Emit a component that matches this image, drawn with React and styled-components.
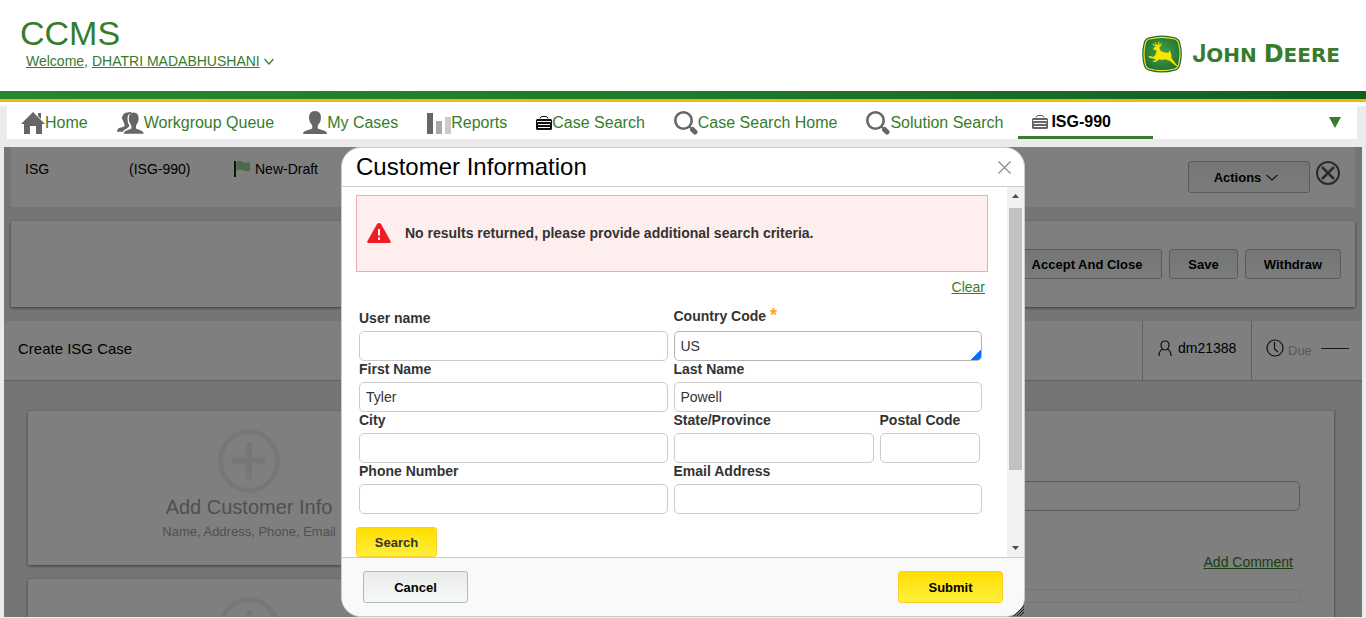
import React from "react";
import styled, { createGlobalStyle } from "styled-components";

const GlobalStyle = createGlobalStyle`
  * { box-sizing: border-box; }
  html, body, #root { height: 100%; }
  body {
    margin: 0;
    background: #ebebeb;
    color: #000;
    font-family: "Liberation Sans", Arial, sans-serif;
    font-size: 14px;
    line-height: 16px;
  }
  a { color: #367c2b; }
  button, input { font-family: inherit; }
`;

const Shell = styled.div`
  display: flex;
  flex-direction: column;
  height: 100vh;
  overflow: hidden;
  padding-bottom: 1px;
`;

/* ---------- header ---------- */

const Header = styled.header`
  display: flex;
  justify-content: space-between;
  align-items: flex-start;
  flex: none;
  height: 91px;
  padding: 14px 26px 0 20px;
  background: #fff;
`;

const AppTitle = styled.h1`
  margin: 0;
  color: #367c2b;
  font-size: 34px;
  font-weight: 400;
  line-height: 38px;
`;

const Welcome = styled.div`
  display: flex;
  align-items: center;
  gap: 4px;
  padding-left: 6px;
  line-height: 18px;
`;

const Brand = styled.div`
  display: flex;
  align-items: center;
  gap: 9px;
  padding-top: 21px;
`;

const Wordmark = styled.span`
  color: #367c2b;
  font-family: "DejaVu Sans", sans-serif;
  font-weight: 700;
  font-size: 20px;
  line-height: 24px;
  white-space: nowrap;
`;

const Initial = styled.span`
  font-family: ${(p) => (p.$baseline ? "Inter, sans-serif" : "inherit")};
  font-size: 24px;
`;

const Stripe = styled.div`
  flex: none;
  height: 15px;
  padding-bottom: 4px;
  background: #fff;
`;

const StripeBar = styled.div`
  height: 11px;
  border-bottom: 3px solid #efbd00;
  background: linear-gradient(to right, #28862f, #1f7a2b 50%, #0f5f20);
`;

/* ---------- tabs ---------- */

const TabBar = styled.nav`
  display: flex;
  flex: none;
  gap: 1px;
  height: 33px;
  margin: 0 9px 8px 7px;
  padding-right: 16px;
  background: #fff;
`;

const Tab = styled.a`
  display: flex;
  align-items: center;
  gap: ${(p) => (p.$active ? "3px" : "0")};
  padding: ${(p) => (p.$active ? "1px 42px 0 14px" : "0 14px")};
  border-bottom: ${(p) => (p.$active ? "3px solid #367c2b" : "0")};
  color: ${(p) => (p.$active ? "#000" : "#367c2b")};
  font-size: 16px;
  font-weight: ${(p) => (p.$active ? 700 : 400)};
  line-height: 20px;
  text-decoration: none;
  white-space: nowrap;
  svg { flex: none; }
`;

const TabMenuButton = styled.button`
  display: flex;
  align-items: center;
  margin-left: auto;
  padding: 0;
  border: 0;
  background: none;
`;

/* ---------- case workspace ---------- */

const Workspace = styled.div`
  position: relative;
  flex: 1;
  min-height: 0;
  margin: 0 4px;
  overflow: hidden;
`;

const CaseHeader = styled.section`
  display: flex;
  align-items: flex-start;
  height: 60px;
  margin: 0 7px;
  padding: 14px 14px 0;
  background: #fff;
`;

const CaseText = styled.span`
  min-width: ${(p) => p.$width || "0"};
`;

const Status = styled.span`
  display: flex;
  align-items: center;
  gap: 5px;
  flex: 1;
`;

const CloseSlot = styled.div`
  padding: 0 1px 0 6px;
`;

const GreyButton = styled.button`
  display: flex;
  align-items: center;
  justify-content: center;
  gap: 5px;
  height: ${(p) => (p.$tall ? "32px" : "30px")};
  width: ${(p) => p.$width};
  padding: 0 ${(p) => (p.$menu ? "6px" : "0")} 0 0;
  border: 1px solid #b5b8b8;
  border-radius: 3px;
  background: linear-gradient(#e9ebea, #f6f9f9);
  color: #000;
  font-size: 13px;
  font-weight: 700;
  white-space: nowrap;
`;

const YellowButton = styled(GreyButton)`
  border-color: #ffcd2b;
  background: linear-gradient(#ffde00, #fff03c);
  color: ${(p) => (p.$soft ? "#333" : "#000")};
`;

const IconButton = styled.button`
  display: flex;
  padding: 0;
  border: 0;
  background: none;
`;

const ActionCard = styled.section`
  display: flex;
  justify-content: flex-end;
  align-items: center;
  gap: 7px;
  height: 86px;
  margin: 14px 7px;
  padding: 0 14px;
  background: #fff;
  box-shadow: 0 1px 3px rgba(0, 0, 0, 0.5);
`;

const StageBar = styled.section`
  display: flex;
  height: 60px;
  border-bottom: 1px solid #c0c0c0;
  background: #fff;
`;

const StageTitle = styled.h2`
  flex: 1;
  margin: 0;
  padding: 20px 14px;
  font-size: 15px;
  font-weight: 400;
`;

const StageCell = styled.div`
  display: flex;
  align-items: center;
  gap: ${(p) => p.$gap};
  width: ${(p) => p.$width};
  padding: 0 0 5px 14px;
  border-left: 1px solid #c0c0c0;
`;

const DueLabel = styled.span`
  padding-top: 6px;
  color: #b4b4b4;
  font-size: 13px;
`;

const DueLine = styled.span`
  width: 28px;
  height: 1px;
  margin-left: 5px;
  background: #333;
`;

const CaseBody = styled.div`
  display: flex;
  gap: 14px;
  padding: 30px 28px 0 24px;
`;

const CardColumn = styled.div`
  display: flex;
  flex-direction: column;
  gap: 14px;
  width: 442px;
`;

const AddCard = styled.section`
  display: flex;
  flex-direction: column;
  align-items: center;
  height: 154px;
  padding-top: 18px;
  background: #fff;
  box-shadow: 0 1px 3px rgba(0, 0, 0, 0.5);
  color: #a0a0a0;
  font-size: 13px;
`;

const AddTitle = styled.span`
  padding: 2px 0 5px;
  font-size: 20px;
  line-height: 24px;
`;

const CommentPanel = styled.section`
  flex: 1;
  height: 400px;
  padding: 70px 34px 0;
  background: #fff;
  box-shadow: 1px 0 2px rgba(0, 0, 0, 0.3);
`;

const CommentRow = styled.div`
  display: flex;
  justify-content: flex-end;
  padding: 43px 7px 19px;
`;

const CommentBox = styled.div`
  height: 14px;
  border: 1px solid #ebebeb;
`;

/* ---------- dialog ---------- */

const Overlay = styled.div`
  position: absolute;
  inset: 0;
  display: flex;
  justify-content: center;
  background: rgba(0, 0, 0, 0.5);
`;

const Dialog = styled.section`
  position: relative;
  display: flex;
  flex-direction: column;
  width: 684px;
  max-width: 100%;
  height: 100%;
  overflow: hidden;
  border: 1px solid #ccc;
  border-radius: 20px;
  background: #fff;
`;

const DialogHeader = styled.header`
  display: flex;
  justify-content: space-between;
  align-items: center;
  flex: none;
  height: 39px;
  padding: 0 13px 0 14px;
  border-bottom: 1px solid #ccc;
`;

const DialogTitle = styled.h2`
  margin: 0;
  font-size: 24px;
  font-weight: 400;
  line-height: 28px;
`;

const DialogMain = styled.div`
  display: flex;
  flex: 1;
  min-height: 0;
`;

const DialogContent = styled.div`
  flex: 1;
  overflow: hidden;
  padding: 8px 19px 0 14px;
`;

const ScrollTrack = styled.div`
  display: flex;
  flex-direction: column;
  align-items: center;
  width: 17px;
  padding: 6px 2px;
  background: #f1f1f1;
`;

const ScrollThumb = styled.div`
  width: 13px;
  height: 262px;
  margin: 9px 0 auto;
  background: #c1c1c1;
`;

const Alert = styled.div`
  display: flex;
  align-items: center;
  gap: 14px;
  height: 77px;
  padding: 0 10px 1px;
  border: 1px solid #e9b0b0;
  background: #feeeee;
  color: #333;
  font-weight: 700;
`;

const ClearRow = styled.div`
  display: flex;
  justify-content: flex-end;
  padding: 7px 3px 15px;
`;

const Fields = styled.div`
  display: grid;
  grid-template-columns: 1fr 1fr;
  gap: 0 6px;
  align-items: end;
  padding: 0 6px 13px 3px;
`;

const FieldPair = styled.div`
  display: grid;
  grid-template-columns: 200px 100px;
  gap: 6px;
`;

const Field = styled.div`
  display: flex;
  flex-direction: column;
  min-width: 0;
  margin-top: ${(p) => (p.$required ? "-2px" : "0")};
`;

const FieldLabel = styled.label`
  padding-bottom: ${(p) => (p.$required ? "7px" : "5px")};
  color: #333;
  font-weight: 700;
  line-height: 16px;
`;

const Star = styled.span`
  color: #ffa414;
  font-size: 18px;
  font-weight: 700;
  line-height: 10px;
`;

const InputWrap = styled.div`
  position: relative;
`;

const TextInput = styled.input`
  display: block;
  width: 100%;
  height: 30px;
  padding: 0 6px;
  border: 1px solid ${(p) => (p.$required ? "#b4b4b4" : "#ccc")};
  border-radius: 5px;
  background: ${(p) => (p.$plain ? "transparent" : "#fff")};
  color: #333;
  font-size: 14px;
`;

const Corner = styled.span`
  position: absolute;
  right: 1px;
  bottom: 1px;
  width: 10px;
  height: 10px;
  border-bottom-right-radius: 4px;
  background: linear-gradient(135deg, transparent 50%, #0b6cff 50%);
`;

const DialogFooter = styled.footer`
  display: flex;
  justify-content: space-between;
  align-items: flex-start;
  flex: none;
  height: 59px;
  padding: 13px 21px 0;
  border-top: 1px solid #ccc;
  background: #f9f9f9;
`;

const ResizeGrip = styled.svg`
  position: absolute;
  right: calc(50% - 341px);
  bottom: 1px;
`;

/* ---------- drawings ---------- */

const Chevron = ({ width, color }) => (
  <svg width={width} height="7" viewBox={`0 0 ${width} 7`} fill="none" stroke={color} strokeWidth="1.2">
    <path d={`M.5 1 L${width / 2} 6 L${width - 0.5} 1`} />
  </svg>
);

const DeereBadge = () => (
  <svg width="42" height="38" viewBox="0 0 124 114">
    <defs>
      <radialGradient id="badge" cx=".5" cy=".45" r=".65">
        <stop offset="0" stopColor="#46a347" />
        <stop offset="1" stopColor="#196b32" />
      </radialGradient>
    </defs>
    <path d="M24 7Q62-4 100 7Q114 10 117 24Q126 57 117 90Q114 104 100 107Q62 118 24 107Q10 104 7 90Q-2 57 7 24Q10 10 24 7Z" fill="#1f6b38" />
    <path d="M25 12Q62 2 99 12Q110 15 112 26Q120 57 112 88Q110 99 99 102Q62 112 25 102Q14 99 12 88Q4 57 12 26Q14 15 25 12Z" fill="url(#badge)" stroke="#f6e21a" strokeWidth="3.5" />
    <path d="M36 40L40 36L45 34Q35 33 32 24Q38 30 44 30Q40 26 41 19Q44 28 50 31Q53 25 50 18Q57 23 54 32Q60 29 59 21Q64 31 54 37L56 45Q63 53 78 53Q85 53 84 48L82 45Q88 47 88 53Q92 60 90 69L108 92Q110 97 105 94L86 78L72 73Q62 76 54 73L44 80L33 81L44 73L30 70L26 69Q21 68 22 63L29 64L34 66Q41 64 43 58L46 46L38 45Z" fill="#fde400" />
  </svg>
);

const HomeIcon = () => (
  <svg width="24" height="24" viewBox="0 0 24 24" fill="#666">
    <path d="M12 1L24 13H21V23H15V15H9V23H3V13H0ZM17 2H20V8L17 5Z" />
  </svg>
);

const person = "M12 0Q18 0 18 7Q18 11 15 14Q14 18 16 18L22 20Q24 21 24 23H0Q0 21 2 20L8 18Q10 18 9 14Q6 11 6 7Q6 0 12 0Z";

const PersonIcon = () => (
  <svg width="24" height="24" viewBox="0 0 24 24" fill="#666">
    <path d={person} />
  </svg>
);

const GroupIcon = () => (
  <svg width="27" height="24" viewBox="0 0 28 24" fill="#666">
    <path d="M11 1Q14 0 16 2Q10 2 11 9Q11 13 13 15L10 18Q7 19 6 21H0Q0 18 3 17Q8 16 8 14L6 9L5 7Q6 1 11 1Z" />
    <path transform="translate(7 1) scale(.86 .96)" d={person} />
  </svg>
);

const ReportsIcon = () => (
  <svg width="24" height="22" viewBox="0 0 24 22">
    <path fill="#666" d="M0 1h6v21H0z" />
    <path fill="#aaa" d="M9 9h6v13H9z" />
    <path fill="#ccc" d="M18 5h6v17h-6z" />
  </svg>
);

const CaseIcon = ({ color }) => (
  <svg width="16" height="16" viewBox="0 0 16 16">
    <path d="M4 3.500Q4.500 1.500 6 1.500H10Q11.500 1.500 12 3.500" fill="none" stroke={color} />
    <path d="M1 4H15L16 5V14L15 15H1L0 14V5Z" fill={color} />
    <path d="M1 6.500H15M2 9.500H14M2 12.500H14" stroke="#fff" />
  </svg>
);

const SearchIcon = () => (
  <svg width="24" height="24" viewBox="0 0 24 24" fill="none">
    <circle cx="9.500" cy="9.500" r="8.200" stroke="#666" strokeWidth="2.600" />
    <path d="M15 15L17 17" stroke="#666" strokeWidth="2" />
    <path d="M18.500 18.500L21 21" stroke="#666" strokeWidth="5" strokeLinecap="round" />
  </svg>
);

const FlagIcon = () => (
  <svg width="16" height="16" viewBox="0 0 16 16">
    <path d="M1 0V16" stroke="#222" strokeWidth="2" />
    <path d="M2.500 1Q6-1 9 1Q12 2 16 1V10Q12 11 9 9Q6 8 2.500 10Z" fill="#94d594" />
  </svg>
);

const CloseCaseIcon = () => (
  <svg width="24" height="24" viewBox="0 0 24 24" fill="none" stroke="#555">
    <circle cx="12" cy="12" r="11" strokeWidth="2" />
    <path d="M6 6L18 18M18 6L6 18" strokeWidth="2.500" />
  </svg>
);

const UserOutlineIcon = () => (
  <svg width="15" height="18" viewBox="0 0 15 18" fill="none" stroke="#222" strokeWidth="1.200">
    <path d="M8 2Q12 2 12 6Q11.500 11 8 11Q4.500 11 4 6Q4 2 8 2ZM5.500 10Q2 12 2 17M10.500 10Q14 12 14 17" />
  </svg>
);

const ClockIcon = () => (
  <svg width="18" height="18" viewBox="0 0 18 18" fill="none" stroke="#222" strokeWidth="1.200">
    <circle cx="9" cy="9" r="8" />
    <path d="M8.500 3V10L12 13" />
  </svg>
);

const PlusIcon = () => (
  <svg width="62" height="64" viewBox="0 0 62 64" fill="none" stroke="#efefef">
    <ellipse cx="31" cy="32" rx="28.500" ry="29.500" strokeWidth="5" />
    <path d="M31 13V50M14 31.500H48" strokeWidth="6" />
  </svg>
);

const WarningIcon = () => (
  <svg width="24" height="20" viewBox="0 0 24 20">
    <path d="M10 1Q12 -1 14 1L23.500 18Q24.500 20 22.500 20H1.500Q-.5 20 .5 18Z" fill="#ee1c25" />
    <path d="M11 6H13V12.500H11ZM11 14.500H13V17H11Z" fill="#fff" />
  </svg>
);

const ScrollArrow = ({ down }) => (
  <svg width="7" height="6" viewBox="0 0 7 6" fill="#505050">
    <path d={down ? "M0 1H7L3.500 5Z" : "M0 5H7L3.500 1Z"} />
  </svg>
);

/* ---------- page ---------- */

const tabs = [
  ["Home", <HomeIcon />],
  ["Workgroup Queue", <GroupIcon />],
  ["My Cases", <PersonIcon />],
  ["Reports", <ReportsIcon />],
  ["Case Search", <CaseIcon color="#111" />],
  ["Case Search Home", <SearchIcon />],
  ["Solution Search", <SearchIcon />],
];

function TextField({ id, label, value, required }) {
  return (
    <Field $required={required}>
      <FieldLabel htmlFor={id} $required={required}>
        {label} {required && <Star>*</Star>}
      </FieldLabel>
      <InputWrap>
        <TextInput id={id} type="text" defaultValue={value} $required={required} />
        {required && <Corner />}
      </InputWrap>
    </Field>
  );
}

function CustomerDialog() {
  return (
    <Overlay>
      <Dialog role="dialog" aria-labelledby="dialog-title">
        <DialogHeader>
          <DialogTitle id="dialog-title">Customer Information</DialogTitle>
          <IconButton aria-label="Close">
            <svg width="13" height="13" viewBox="0 0 13 13" stroke="#888" strokeWidth="1.100">
              <path d="M.5 .5L12.500 12.500M12.500 .5L.5 12.500" />
            </svg>
          </IconButton>
        </DialogHeader>
        <DialogMain>
          <DialogContent>
            <Alert role="alert">
              <WarningIcon />
              No results returned, please provide additional search criteria.
            </Alert>
            <ClearRow>
              <a href="#clear">Clear</a>
            </ClearRow>
            <Fields>
              <TextField id="user" label="User name" />
              <TextField id="country" label="Country Code" value="US" required />
              <TextField id="first" label="First Name" value="Tyler" />
              <TextField id="last" label="Last Name" value="Powell" />
              <TextField id="city" label="City" />
              <FieldPair>
                <TextField id="state" label="State/Province" />
                <TextField id="postal" label="Postal Code" />
              </FieldPair>
              <TextField id="phone" label="Phone Number" />
              <TextField id="email" label="Email Address" />
            </Fields>
            <YellowButton $width="81px" $soft>Search</YellowButton>
          </DialogContent>
          <ScrollTrack aria-hidden="true">
            <ScrollArrow />
            <ScrollThumb />
            <ScrollArrow down />
          </ScrollTrack>
        </DialogMain>
        <DialogFooter>
          <GreyButton $width="105px" $tall>Cancel</GreyButton>
          <YellowButton $width="105px" $tall>Submit</YellowButton>
        </DialogFooter>
      </Dialog>
      <ResizeGrip width="10" height="10" viewBox="0 0 10 10" stroke="#111">
        <path d="M0 10L10 0M3 10L10 3M6 10L10 6" />
      </ResizeGrip>
    </Overlay>
  );
}

export default function App() {
  return (
    <Shell>
      <GlobalStyle />
      <Header>
        <div>
          <AppTitle>CCMS</AppTitle>
          <Welcome>
            <a href="#profile">Welcome,</a>
            <a href="#profile">DHATRI MADABHUSHANI</a>
            <Chevron width={10} color="#367c2b" />
          </Welcome>
        </div>
        <Brand>
          <DeereBadge />
          <Wordmark>
            <Initial $baseline>J</Initial>OHN <Initial>D</Initial>EERE
          </Wordmark>
        </Brand>
      </Header>
      <Stripe>
        <StripeBar />
      </Stripe>
      <TabBar>
        {tabs.map(([name, icon]) => (
          <Tab key={name} href="#tab">
            {icon}
            {name}
          </Tab>
        ))}
        <Tab href="#tab" $active>
          <CaseIcon color="#666" />
          ISG-990
        </Tab>
        <TabMenuButton aria-label="All tabs">
          <svg width="12" height="11" viewBox="0 0 12 11" fill="#367c2b">
            <path d="M0 0H12L6 11Z" />
          </svg>
        </TabMenuButton>
      </TabBar>
      <Workspace>
        <CaseHeader>
          <CaseText $width="104px">ISG</CaseText>
          <CaseText $width="105px">(ISG-990)</CaseText>
          <Status>
            <FlagIcon />
            New-Draft
          </Status>
          <GreyButton $width="122px" $tall $menu>
            Actions <Chevron width={12} color="#222" />
          </GreyButton>
          <CloseSlot>
            <IconButton aria-label="Close case">
              <CloseCaseIcon />
            </IconButton>
          </CloseSlot>
        </CaseHeader>
        <ActionCard>
          <GreyButton $width="150px">Accept And Close</GreyButton>
          <GreyButton $width="69px">Save</GreyButton>
          <GreyButton $width="96px">Withdraw</GreyButton>
        </ActionCard>
        <StageBar>
          <StageTitle>Create ISG Case</StageTitle>
          <StageCell $width="109px" $gap="6px">
            <UserOutlineIcon />
            dm21388
          </StageCell>
          <StageCell $width="111px" $gap="4px">
            <ClockIcon />
            <DueLabel>Due</DueLabel>
            <DueLine />
          </StageCell>
        </StageBar>
        <CaseBody>
          <CardColumn>
            <AddCard>
              <PlusIcon />
              <AddTitle>Add Customer Info</AddTitle>
              Name, Address, Phone, Email
            </AddCard>
            <AddCard>
              <PlusIcon />
            </AddCard>
          </CardColumn>
          <CommentPanel>
            <TextInput type="text" aria-label="Subject" $required $plain />
            <CommentRow>
              <a href="#comment">Add Comment</a>
            </CommentRow>
            <CommentBox />
          </CommentPanel>
        </CaseBody>
        <CustomerDialog />
      </Workspace>
    </Shell>
  );
}
